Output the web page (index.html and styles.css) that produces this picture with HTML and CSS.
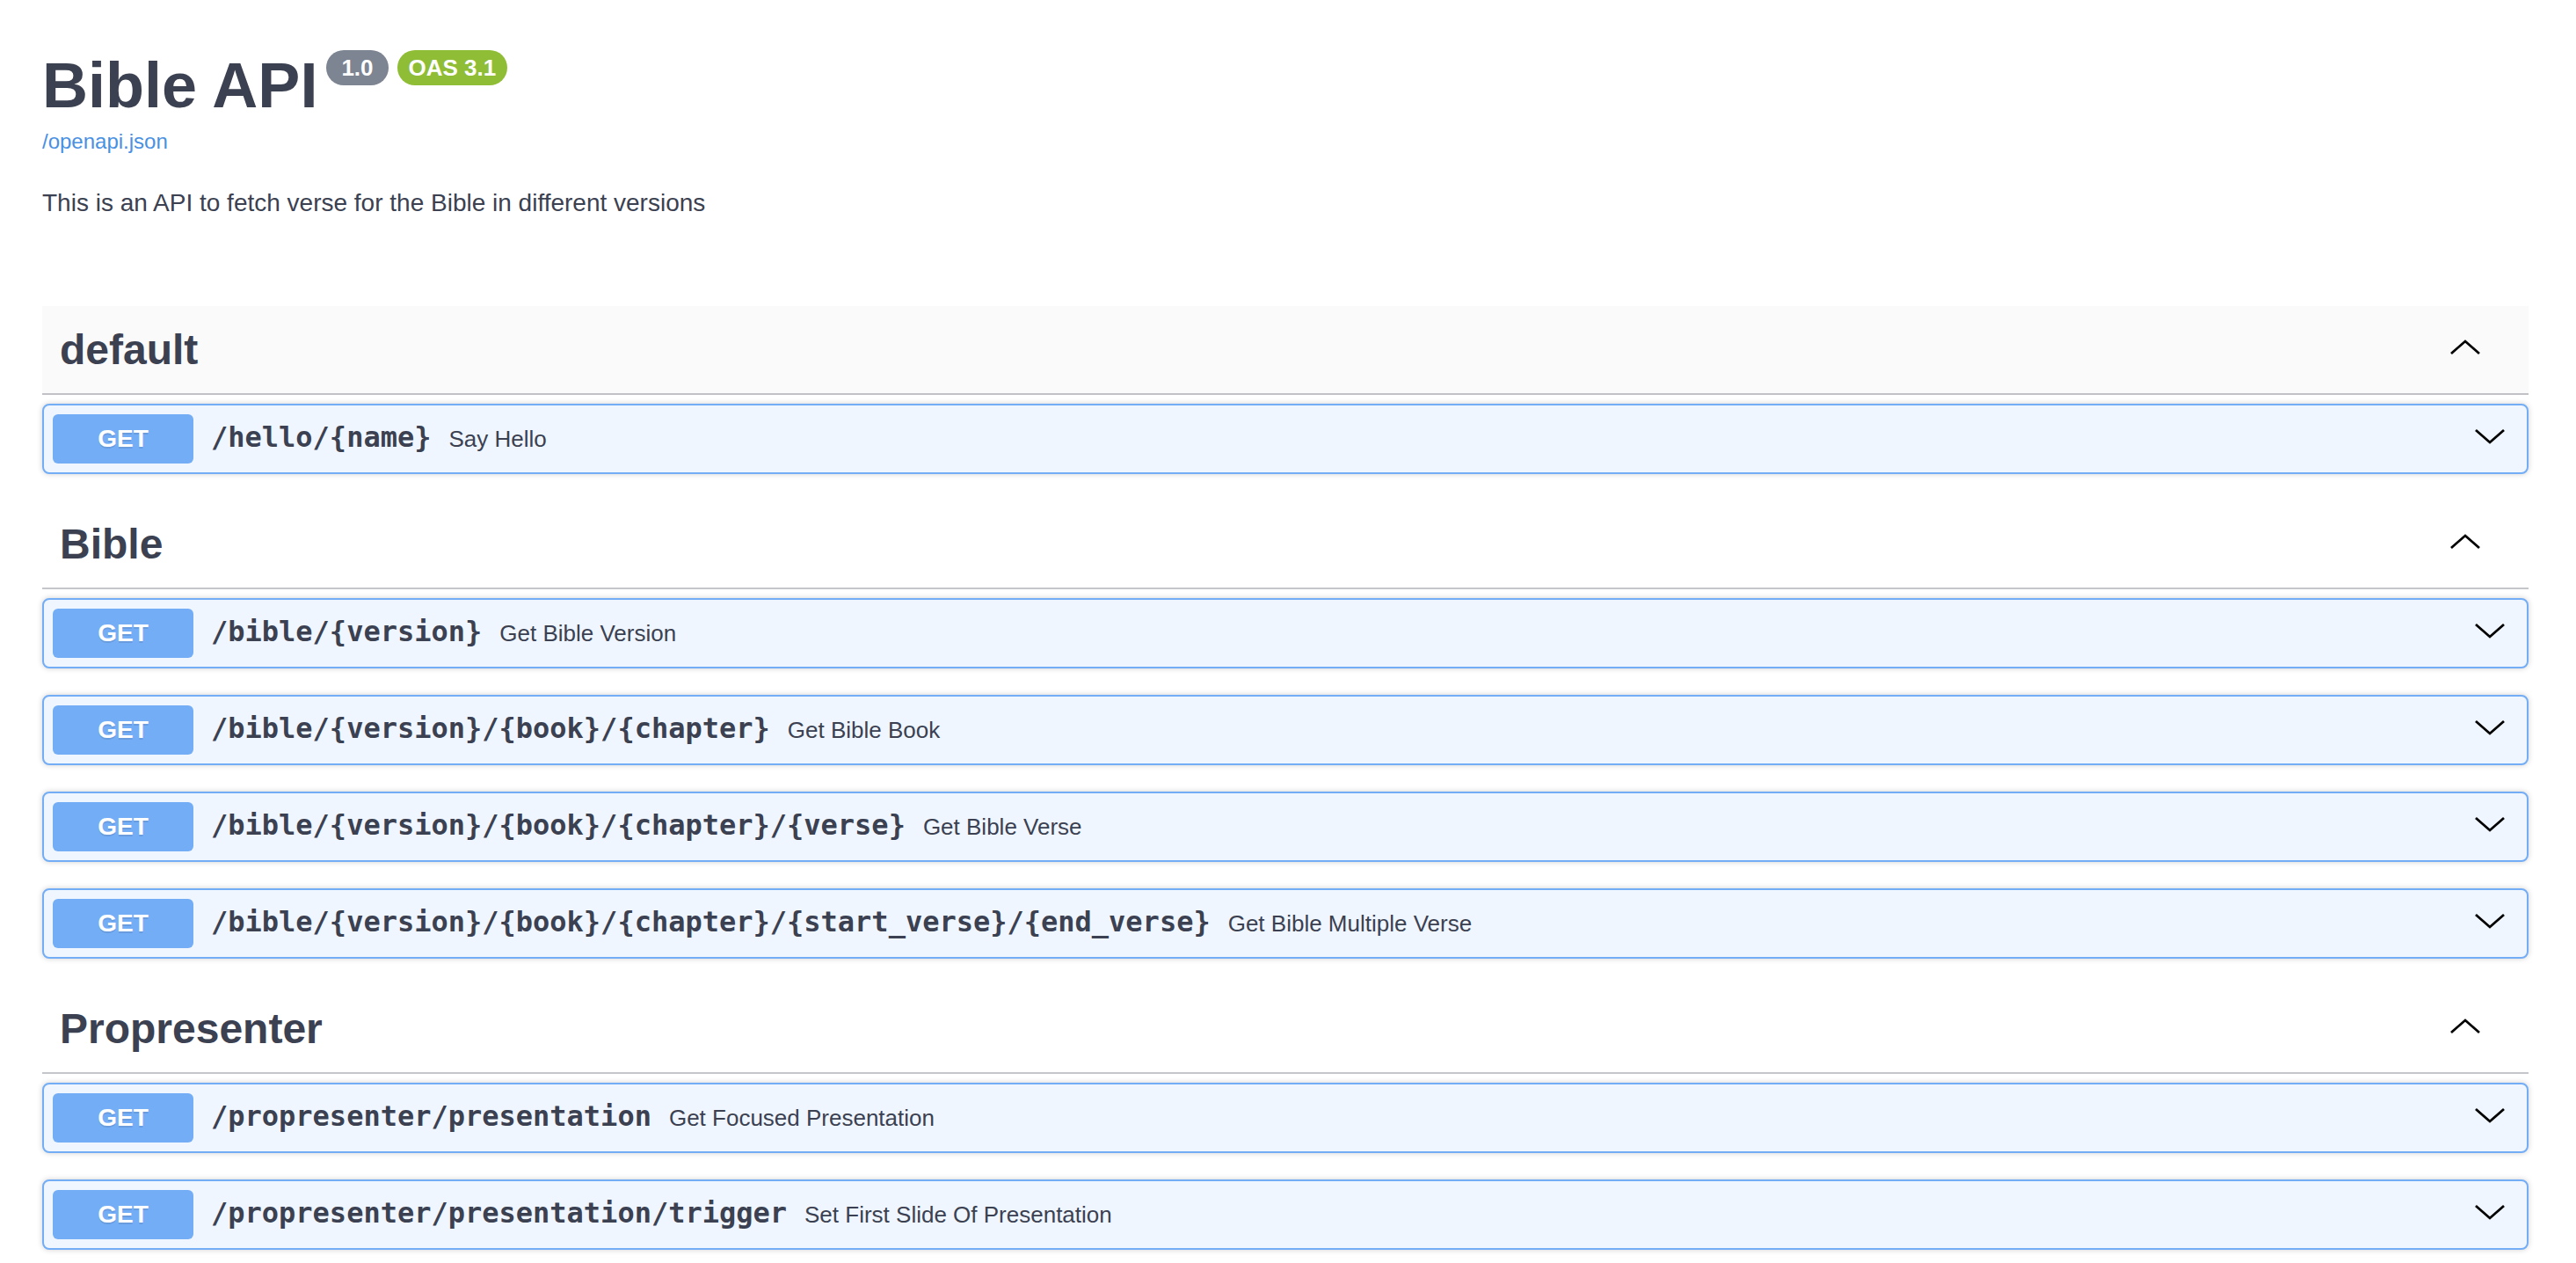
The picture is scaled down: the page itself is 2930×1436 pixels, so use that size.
FILE: index.html
```html
<!DOCTYPE html>
<html lang="en">
<head>
<meta charset="utf-8">
<title>Bible API - Swagger UI</title>
<link rel="stylesheet" href="styles.css">
</head>
<body>
<div class="swagger-ui">
  <div class="wrapper">
    <section class="info">
      <h2 class="title">Bible API<span class="badges"><small class="badge badge-version">1.0</small><small class="badge badge-oas">OAS 3.1</small></span></h2>
      <a class="spec-link" href="#">/openapi.json</a>
      <p class="description">This is an API to fetch verse for the Bible in different versions</p>
    </section>

    <div class="tag-sections">
      <section class="tag-section">
        <h3 class="opblock-tag is-hover">
          <span class="tag-name">default</span>
          <button class="expand" type="button"><svg width="40" height="40" viewBox="0 0 40 40"><polyline points="4,27 20,13 36,27"/></svg></button>
        </h3>
        <div class="operations">
          <div class="opblock">
            <div class="summary">
              <span class="method">GET</span>
              <span class="path">/hello/{name}</span>
              <span class="desc">Say Hello</span>
              <button class="arrow" type="button"><svg width="40" height="40" viewBox="0 0 40 40"><polyline points="4,13 20,27 36,13"/></svg></button>
            </div>
          </div>
        </div>
      </section>

      <section class="tag-section">
        <h3 class="opblock-tag">
          <span class="tag-name">Bible</span>
          <button class="expand" type="button"><svg width="40" height="40" viewBox="0 0 40 40"><polyline points="4,27 20,13 36,27"/></svg></button>
        </h3>
        <div class="operations">
          <div class="opblock">
            <div class="summary">
              <span class="method">GET</span>
              <span class="path">/bible/{version}</span>
              <span class="desc">Get Bible Version</span>
              <button class="arrow" type="button"><svg width="40" height="40" viewBox="0 0 40 40"><polyline points="4,13 20,27 36,13"/></svg></button>
            </div>
          </div>
          <div class="opblock">
            <div class="summary">
              <span class="method">GET</span>
              <span class="path">/bible/{version}/{book}/{chapter}</span>
              <span class="desc">Get Bible Book</span>
              <button class="arrow" type="button"><svg width="40" height="40" viewBox="0 0 40 40"><polyline points="4,13 20,27 36,13"/></svg></button>
            </div>
          </div>
          <div class="opblock">
            <div class="summary">
              <span class="method">GET</span>
              <span class="path">/bible/{version}/{book}/{chapter}/{verse}</span>
              <span class="desc">Get Bible Verse</span>
              <button class="arrow" type="button"><svg width="40" height="40" viewBox="0 0 40 40"><polyline points="4,13 20,27 36,13"/></svg></button>
            </div>
          </div>
          <div class="opblock">
            <div class="summary">
              <span class="method">GET</span>
              <span class="path">/bible/{version}/{book}/{chapter}/{start_verse}/{end_verse}</span>
              <span class="desc">Get Bible Multiple Verse</span>
              <button class="arrow" type="button"><svg width="40" height="40" viewBox="0 0 40 40"><polyline points="4,13 20,27 36,13"/></svg></button>
            </div>
          </div>
        </div>
      </section>

      <section class="tag-section">
        <h3 class="opblock-tag">
          <span class="tag-name">Propresenter</span>
          <button class="expand" type="button"><svg width="40" height="40" viewBox="0 0 40 40"><polyline points="4,27 20,13 36,27"/></svg></button>
        </h3>
        <div class="operations">
          <div class="opblock">
            <div class="summary">
              <span class="method">GET</span>
              <span class="path">/propresenter/presentation</span>
              <span class="desc">Get Focused Presentation</span>
              <button class="arrow" type="button"><svg width="40" height="40" viewBox="0 0 40 40"><polyline points="4,13 20,27 36,13"/></svg></button>
            </div>
          </div>
          <div class="opblock">
            <div class="summary">
              <span class="method">GET</span>
              <span class="path">/propresenter/presentation/trigger</span>
              <span class="desc">Set First Slide Of Presentation</span>
              <button class="arrow" type="button"><svg width="40" height="40" viewBox="0 0 40 40"><polyline points="4,13 20,27 36,13"/></svg></button>
            </div>
          </div>
        </div>
      </section>
    </div>
  </div>
</div>
</body>
</html>
```

FILE: styles.css
```css
* {
  box-sizing: border-box;
}

html,
body {
  margin: 0;
  padding: 0;
  background: #fff;
}

body {
  font-family: "Liberation Sans", Arial, Helvetica, sans-serif;
  color: #3b4151;
}

.wrapper {
  padding: 0 54px 60px 48px;
}

/* ---------- info ---------- */
.info {
  padding-top: 57px;
}

.title {
  display: flex;
  align-items: flex-start;
  margin: 0;
  height: 80px;
  font-size: 72px;
  line-height: 80px;
  font-weight: 700;
  color: #3b4151;
}

.badges {
  display: flex;
  gap: 10px;
  margin-left: 10px;
}

.badge {
  display: block;
  height: 40px;
  line-height: 40px;
  border-radius: 57px;
  font-size: 26px;
  font-weight: 700;
  color: #fff;
}

.badge-version {
  background: #7d8492;
  padding: 0 17px;
}

.badge-oas {
  background: #8fbd35;
  padding: 0 13px;
}

.spec-link {
  display: block;
  width: max-content;
  margin-top: 10px;
  font-size: 24px;
  line-height: 28px;
  color: #4990e2;
  text-decoration: none;
}

.description {
  margin: 35px 0 0;
  font-size: 28px;
  line-height: 42px;
}

/* ---------- tags ---------- */
.tag-sections {
  margin-top: 96px;
}

.tag-section {
  display: flex;
  flex-direction: column;
}

.opblock-tag {
  display: flex;
  align-items: center;
  margin: 0 0 10px;
  padding: 20px 40px 20px 20px;
  border-bottom: 2px solid rgba(59, 65, 81, 0.3);
  font-size: 48px;
  font-weight: 700;
  color: #3b4151;
}

.opblock-tag.is-hover {
  background: rgba(0, 0, 0, 0.02);
}

.tag-name {
  flex: 1 1 auto;
  line-height: 59px;
}

.expand,
.arrow {
  display: flex;
  border: 0;
  background: none;
  padding: 0 12px;
  cursor: pointer;
}

.expand {
  margin-bottom: 6px;
}

.arrow {
  margin-bottom: 7px;
}

.expand polyline,
.arrow polyline {
  fill: none;
  stroke: #000;
  stroke-width: 2.8;
  stroke-linecap: butt;
  stroke-linejoin: miter;
}

/* ---------- operations ---------- */
.operations {
  display: flex;
  flex-direction: column;
}

.opblock {
  margin: 0 0 30px;
  border: 2px solid #73adf6;
  border-radius: 8px;
  background: #eff6ff;
  box-shadow: 0 0 6px rgba(0, 0, 0, 0.19);
}

.summary {
  display: flex;
  align-items: center;
  padding: 10px;
}

.method {
  min-width: 160px;
  padding: 12px 0;
  border-radius: 6px;
  background: #73adf6;
  color: #fff;
  font-size: 28px;
  line-height: 32px;
  font-weight: 700;
  text-align: center;
  text-shadow: 0 2px 0 rgba(0, 0, 0, 0.1);
}

.path {
  padding: 0 20px 4px;
  font-family: "DejaVu Sans Mono", "Liberation Mono", monospace;
  font-size: 32px;
  line-height: 37px;
  font-weight: 700;
  color: #3b4151;
}

.desc {
  flex: 1 1 auto;
  font-size: 26px;
  line-height: 30px;
  color: #3b4151;
}
```
